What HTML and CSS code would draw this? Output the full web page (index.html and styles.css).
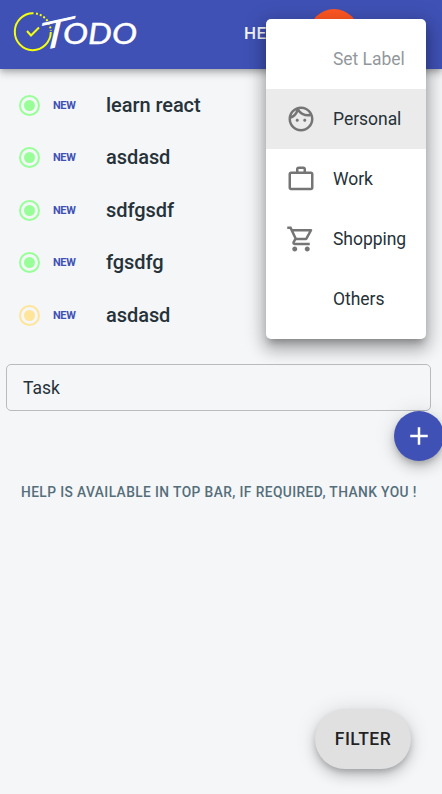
FILE: index.html
```
<!DOCTYPE html>
<html lang="en">
<head>
<meta charset="utf-8">
<title>Todo</title>
<link rel="stylesheet" href="styles.css">
</head>
<body>
<header class="topbar">
  <svg class="logo" width="130" height="50" viewBox="0 0 130 50" role="img" aria-label="Todo">
    <g fill="none" stroke="#f6ff0a" stroke-width="2">
      <path d="M21.500 6.200A18 18.500 0 1 0 38.800 25"/>
      <path d="M24 6.500A18 18.500 0 0 1 38.800 24" stroke-dasharray="2 2"/>
      <path d="M15 24l4 4.500 8-8" stroke-width="2"/>
    </g>
    <g class="logo-text">
      <text class="logo-t" transform="matrix(1.5 -.33 -.24 1.03 40.500 40.500)" font-size="38" text-anchor="middle">T</text>
      <text x="51" y="36.500" font-size="28" textLength="74" lengthAdjust="spacingAndGlyphs">ODO</text>
    </g>
  </svg>
  <span class="help">HELP</span>
  <span class="avatar"></span>
</header>

<main class="content">
  <ul class="tasks">
    <li class="task"><span class="radio"></span><span class="new">NEW</span><span class="name">learn react</span></li>
    <li class="task"><span class="radio"></span><span class="new">NEW</span><span class="name">asdasd</span></li>
    <li class="task"><span class="radio"></span><span class="new">NEW</span><span class="name">sdfgsdf</span></li>
    <li class="task"><span class="radio"></span><span class="new">NEW</span><span class="name">fgsdfg</span></li>
    <li class="task"><span class="radio yellow"></span><span class="new">NEW</span><span class="name">asdasd</span></li>
  </ul>
  <div class="field">Task</div>
  <button class="add" aria-label="Add">
    <svg width="30" height="30" viewBox="0 0 24 24"><path d="M19 13h-6v6h-2v-6H5v-2h6V5h2v6h6v2z"/></svg>
  </button>
  <p class="hint">HELP IS AVAILABLE IN TOP BAR, IF REQUIRED, THANK YOU !</p>
</main>

<ul class="menu">
  <li class="item disabled"><span class="icon"></span><span class="label">Set Label</span></li>
  <li class="item selected"><span class="icon"><svg viewBox="0 0 24 24"><path d="M10.250 13c0 .69-.56 1.250-1.250 1.250S7.750 13.690 7.750 13s.56-1.250 1.250-1.250 1.250.56 1.250 1.250zM15 11.750c-.69 0-1.250.56-1.250 1.250s.56 1.250 1.250 1.250 1.250-.56 1.250-1.250-.56-1.250-1.250-1.250zm7 .25c0 5.520-4.480 10-10 10S2 17.520 2 12 6.480 2 12 2s10 4.480 10 10zM10.660 4.120C12.060 6.440 14.600 8 17.500 8c.46 0 .91-.05 1.340-.12C17.440 5.560 14.900 4 12 4c-.46 0-.91.05-1.340.12zM4.420 9.470c1.710-.97 3.030-2.550 3.660-4.440C6.370 6 5.050 7.580 4.420 9.470zM20 12c0-.78-.12-1.530-.33-2.240-.7.15-1.420.24-2.170.24-3.130 0-5.920-1.440-7.760-3.690C8.690 8.870 6.600 10.880 4 11.860c.01.04 0 .09 0 .14 0 4.420 3.580 8 8 8s8-3.580 8-8z"/></svg></span><span class="label">Personal</span></li>
  <li class="item"><span class="icon"><svg viewBox="0 0 24 24"><path fill-rule="evenodd" d="M14 6V4h-4v2h4zM4 8v11h16V8H4zm16-2c1.110 0 2 .89 2 2v11c0 1.110-.89 2-2 2H4c-1.110 0-2-.89-2-2l.01-11c0-1.110.88-2 1.990-2h4V4c0-1.110.89-2 2-2h4c1.110 0 2 .89 2 2v2h4z"/></svg></span><span class="label">Work</span></li>
  <li class="item"><span class="icon"><svg viewBox="0 0 24 24"><path d="M15.550 13c.75 0 1.410-.41 1.750-1.030l3.580-6.490c.37-.66-.11-1.480-.87-1.480H5.210l-.94-2H1v2h2l3.600 7.590-1.350 2.440C4.520 15.370 5.480 17 7 17h12v-2H7l1.100-2h7.450zM6.160 6h12.150l-2.760 5H8.530L6.160 6zM7 18c-1.100 0-1.990.9-1.990 2S5.900 22 7 22s2-.9 2-2-.9-2-2-2zm10 0c-1.100 0-1.990.9-1.990 2s.89 2 1.990 2 2-.9 2-2-.9-2-2-2z"/></svg></span><span class="label">Shopping</span></li>
  <li class="item"><span class="icon"></span><span class="label">Others</span></li>
</ul>

<button class="filter">FILTER</button>
</body>
</html>
```
FILE: styles.css
```
* { box-sizing: border-box; }
html, body { height: 100%; }
body {
  margin: 0;
  overflow: hidden;
  position: relative;
  background: #f4f6f8;
  color: #263238;
  font-family: Roboto, "Liberation Sans", sans-serif;
}
ul { list-style: none; margin: 0; padding: 0; }
button { border: 0; padding: 0; font-family: inherit; }

.topbar {
  height: 69px;
  display: flex;
  align-items: center;
  background: #3f51b5;
  padding-left: 12px;
  position: relative;
  box-shadow: 0 2.500px 5px -1.250px rgba(0,0,0,.2), 0 5px 6.250px 0 rgba(0,0,0,.14), 0 1.250px 12.500px 0 rgba(0,0,0,.12);
}
.logo { margin-top: -5px; overflow: visible; }
.logo-text {
  fill: #fff;
  font-family: Lato, sans-serif;
  font-style: italic;
  font-weight: 400;
  stroke: #fff;
  stroke-width: .4px;
}
.logo-t { font-style: normal; font-weight: 300; stroke-width: 1.200px; }
.help {
  margin-left: 102px;
  width: 46px;
  margin-top: -3px;
  color: #f4f6f8;
  font-size: 17px;
  font-weight: 500;
  letter-spacing: .5px;
}
.avatar {
  width: 50px;
  height: 50px;
  margin-top: -1px;
  margin-left: 19px;
  border-radius: 50%;
  background: #ff5722;
}

.content { padding-top: 10.200px; }
.task {
  height: 52.500px;
  display: flex;
  align-items: center;
  padding-left: 19px;
}
.radio {
  width: 21px;
  height: 21px;
  border: 2px solid #98ff98;
  border-radius: 50%;
  padding: 3px;
  background: #98ff98 content-box;
}
.radio.yellow { border-color: #ffe599; background-color: #ffe599; }
.new {
  width: 53px;
  margin-left: 13px;
  color: #3f51b5;
  font-size: 11px;
  font-weight: 700;
  line-height: 13px;
  letter-spacing: -.4px;
}
.name { font-size: 20px; font-weight: 500; letter-spacing: -.06px; line-height: 23px; }

.field {
  width: 425px;
  height: 47px;
  margin: 22.300px 0 0 6px;
  display: flex;
  align-items: center;
  padding: 1px 0 0 16px;
  border: 1px solid #b9bbbd;
  border-radius: 5px;
  font-size: 17.500px;
}
.add {
  display: flex;
  align-items: center;
  justify-content: center;
  width: 50px;
  height: 50px;
  margin-left: 394px;
  border-radius: 50%;
  background: #3f51b5;
  box-shadow: 0 3.750px 6.250px -1.250px rgba(0,0,0,.2), 0 7.500px 12.500px 0 rgba(0,0,0,.14), 0 1.250px 22.500px 0 rgba(0,0,0,.12);
}
.add svg { fill: #fff; }
.hint {
  margin: 21px 0 0 21px;
  color: #546e7a;
  font-size: 13.750px;
  font-weight: 500;
  line-height: 20px;
  letter-spacing: .41px;
  white-space: nowrap;
}

.menu {
  position: absolute;
  left: 266px;
  top: 19px;
  width: 160px;
  height: 320px;
  padding: 10px 0;
  border-radius: 5px;
  background: #fff;
  box-shadow: 0 6.250px 7.500px -3.750px rgba(0,0,0,.25), 0 10px 15px 1.250px rgba(0,0,0,.18), 0 3.750px 20px 3.750px rgba(0,0,0,.16);
}
.item {
  height: 60px;
  display: flex;
  align-items: center;
  padding-left: 20px;
  font-size: 17.500px;
  letter-spacing: -.03px;
  white-space: nowrap;
}
.item.selected { background: #ebebeb; }
.item.disabled { opacity: .5; }
.icon { width: 30px; height: 30px; margin-right: 17px; flex: none; }
.icon svg { display: block; width: 30px; height: 30px; fill: #757575; }

.filter {
  position: absolute;
  left: 315px;
  top: 709px;
  width: 96px;
  height: 60px;
  border-radius: 30px;
  background: #e0e0e0;
  color: rgba(0,0,0,.87);
  font-size: 17.500px;
  font-weight: 500;
  letter-spacing: .5px;
  box-shadow: 0 3.750px 6.250px -1.250px rgba(0,0,0,.2), 0 7.500px 12.500px 0 rgba(0,0,0,.14), 0 1.250px 22.500px 0 rgba(0,0,0,.12);
}
```
